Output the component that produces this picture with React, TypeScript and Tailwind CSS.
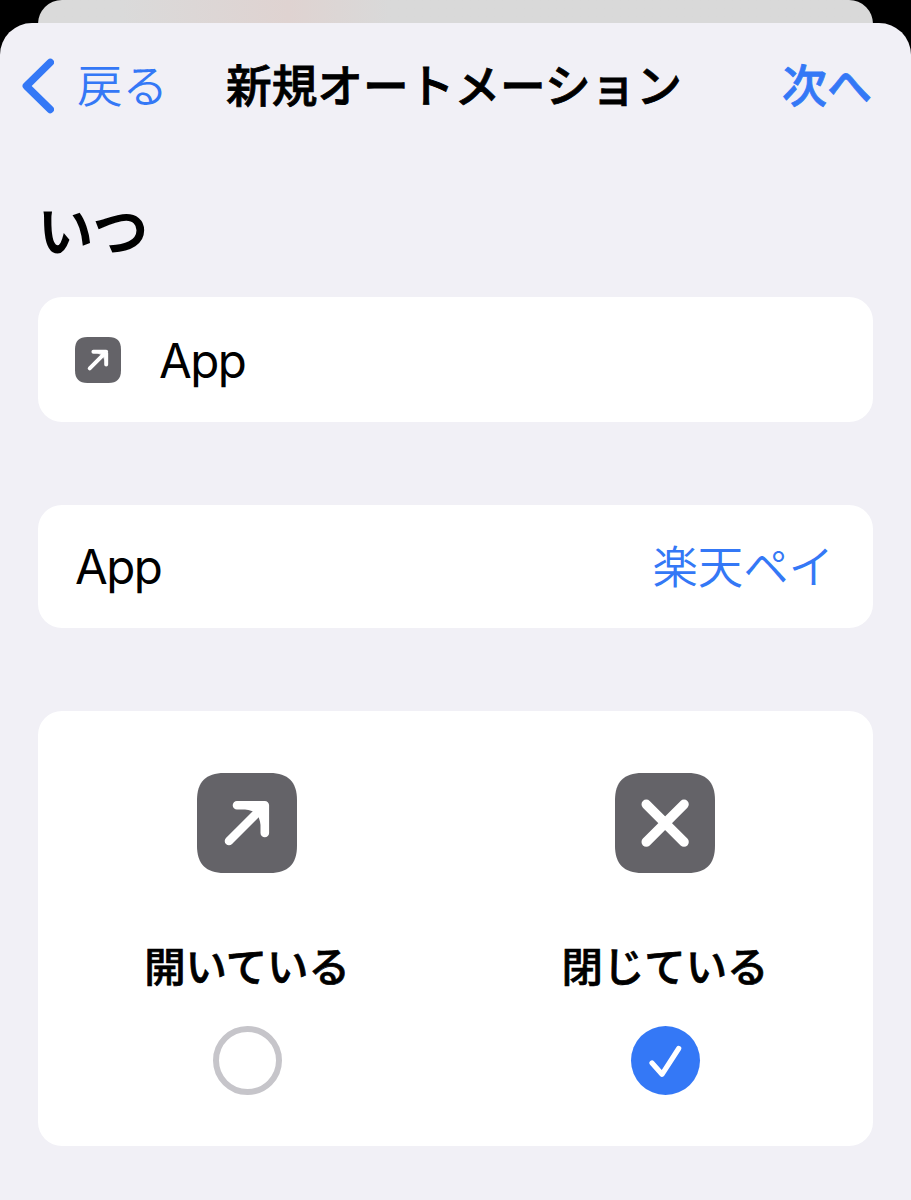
import { useState } from 'react';

type Mode = 'open' | 'close';

const APP_NAME = '楽天ペイ';

// --- Icons ---
function BackIcon() {
  return (
    <svg className="w-8 h-14 shrink-0" viewBox="0 0 32 56" fill="none" stroke="currentColor" strokeWidth={7.4}>
      <path strokeLinecap="round" strokeLinejoin="round" d="M28.3 4.3L4.3 28L28.3 51.5" />
    </svg>
  );
}

function ArrowTile({ className }: { className: string }) {
  return (
    <svg className={className} viewBox="0 0 100 100" fill="none">
      <path
        fill="#646368"
        d="M27 0H73C91 0 100 9 100 27V73C100 91 91 100 73 100H27C9 100 0 91 0 73V27C0 9 9 0 27 0Z"
      />
      <path
        stroke="#fff"
        strokeWidth={8.6}
        strokeLinecap="round"
        strokeLinejoin="round"
        d="M40 32.2H67.8V60M67.8 32.2L32 68"
      />
      {/* Soft joint where the head meets the shaft */}
      <path fill="#fff" d="M48 36L59 35.4L68 32L64.6 41L64 52L61 42L58 39Z" />
    </svg>
  );
}

function CloseTile({ className }: { className: string }) {
  return (
    <svg className={className} viewBox="0 0 100 100" fill="none">
      <path
        fill="#646368"
        d="M27 0H73C91 0 100 9 100 27V73C100 91 91 100 73 100H27C9 100 0 91 0 73V27C0 9 9 0 27 0Z"
      />
      <path stroke="#fff" strokeWidth={9.6} strokeLinecap="round" d="M31.3 31.3L69 69M69 31.3L31.3 69" />
    </svg>
  );
}

function Radio({ checked }: { checked: boolean }) {
  if (!checked) return <span className="size-[69px] rounded-full border-[6px] border-[#c6c5ca]" />;

  return (
    <span className="flex size-[69px] items-center justify-center rounded-full bg-[#3478f6]">
      <svg className="size-[69px]" viewBox="0 0 69 69" fill="none" stroke="#fff" strokeWidth={5.2}>
        <path strokeLinecap="round" strokeLinejoin="round" d="M21 37L31 48.3L47.7 22.5" />
      </svg>
    </span>
  );
}

const options: { id: Mode; label: string; Tile: typeof ArrowTile }[] = [
  { id: 'open', label: '開いている', Tile: ArrowTile },
  { id: 'close', label: '閉じている', Tile: CloseTile },
];

export default function App() {
  const [mode, setMode] = useState<Mode>('close');

  return (
    <div className="flex h-[1200px] w-[911px] flex-col overflow-hidden bg-black font-['Inter','Noto_Sans_CJK_JP',sans-serif] text-black">
      {/* Sheet underneath */}
      <div className="mx-[38px] h-[60px] shrink-0 rounded-t-[24px] bg-linear-to-r from-[#dadada] from-10% via-[#dfd3d1] via-30% to-[#d9d9d9] to-42%" />

      <main className="-mt-[37px] flex-1 rounded-t-[32px] bg-[#f1f0f6] pt-px">
        <header className="flex h-[124px] items-center pl-[22px] pr-[39px]">
          <button className="flex w-[204px] shrink-0 items-center gap-[23px] text-[#3478f6]">
            <BackIcon />
            <span className="pt-px text-[45.5px] font-[350] leading-none">戻る</span>
          </button>
          <h1 className="pt-[2px] text-[45.7px] font-medium leading-none whitespace-nowrap [-webkit-text-stroke:0.8px_currentColor]">
            新規オートメーション
          </h1>
          <button className="ml-auto pt-px text-[45px] font-medium leading-none text-[#3478f6] [-webkit-text-stroke:0.8px_currentColor]">
            次へ
          </button>
        </header>

        <section className="px-[38px]">
          <h2 className="flex h-[149px] items-center pt-[18px] text-[55px] font-medium leading-none [-webkit-text-stroke:1.6px_currentColor]">
            いつ
          </h2>

          <div className="flex h-[125px] items-center gap-[38px] rounded-[24px] bg-white px-[37px]">
            <ArrowTile className="size-[46px]" />
            <span className="pt-[2px] text-[47.5px] leading-none tracking-[-1.6px]">App</span>
          </div>

          <div className="mt-[83px] flex h-[123px] items-center justify-between rounded-[24px] bg-white pl-[37px] pr-[39px]">
            <span className="pt-px text-[47.5px] leading-none tracking-[-1.6px]">App</span>
            <button className="pt-[2px] text-[45.4px] font-[350] leading-none text-[#3478f6]">{APP_NAME}</button>
          </div>

          <div className="mt-[83px] grid h-[435px] grid-cols-[418px_418px] rounded-[24px] bg-white">
            {options.map(({ id, label, Tile }) => (
              <button key={id} onClick={() => setMode(id)} className="flex flex-col items-center pt-[62px]">
                <Tile className="size-[100px]" />
                <span className="mt-[73px] mb-[38px] text-[41.4px] font-medium leading-[42px] [-webkit-text-stroke:0.7px_currentColor]">
                  {label}
                </span>
                <Radio checked={mode === id} />
              </button>
            ))}
          </div>
        </section>
      </main>
    </div>
  );
}
